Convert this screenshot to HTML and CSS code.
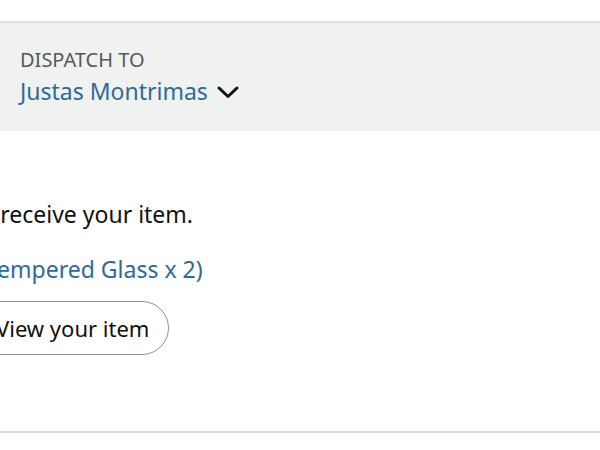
FILE: index.html
```html
<!DOCTYPE html>
<html lang="en">
<head>
    <meta charset="UTF-8">
    <meta name="viewport" content="width=device-width, initial-scale=1.0">
    <title>Order confirmed</title>
    <link rel="stylesheet" href="styles.css">
</head>
<body>
    <div class="page">
        <div class="dispatch">
            <div class="dispatch-label">DISPATCH TO</div>
            <div class="dispatch-name">
                Justas Montrimas
                <svg class="chevron" width="24" height="14" viewBox="0 0 24 14">
                    <path d="M3 3 L12 11.5 L21 3" fill="none" stroke="#0f1111" stroke-width="3" stroke-linecap="round" stroke-linejoin="round"/>
                </svg>
            </div>
        </div>

        <div class="order">
            <p class="order-note">to receive your item.</p>
            <a class="order-item" href="#">(Tempered Glass x 2)</a>
            <button class="view-button" type="button">View your item</button>
        </div>
    </div>
</body>
</html>
```

FILE: styles.css
```css
* {
    margin: 0;
    padding: 0;
    box-sizing: border-box;
}

body {
    font-family: 'Noto Sans', 'Open Sans', sans-serif;
    background: #fff;
    color: #0f1111;
    width: 600px;
    height: 450px;
    overflow: hidden;
}

.page {
    padding-top: 21px;
}

.dispatch {
    background: #f0f2f2;
    border-top: 2px solid #dfe1e1;
    height: 110px;
    padding: 25px 20px 0;
}

.dispatch-label {
    font-size: 20px;
    color: #565959;
    line-height: 24px;
}

.dispatch-name {
    display: flex;
    align-items: center;
    gap: 8px;
    font-size: 23px;
    color: #2f6a97;
    line-height: 30px;
    margin-top: 4px;
}

.chevron {
    margin-top: 2px;
}

.order {
    display: flex;
    flex-direction: column;
    align-items: flex-start;
    margin-left: -28px;
    height: 302px;
    padding-top: 68px;
    border-bottom: 2px solid #dcdcdc;
}

.order-note {
    font-size: 23px;
    line-height: 30px;
}

.order-item {
    font-size: 23px;
    line-height: 30px;
    color: #2f6a97;
    text-decoration: none;
    margin-top: 25px;
    margin-left: 7px;
}

.view-button {
    margin-top: 17px;
    height: 54px;
    padding: 0 19px 0 23px;
    border: 1px solid #8d9096;
    border-radius: 27px;
    background: #fff;
    font-family: inherit;
    font-size: 22px;
    color: #0f1111;
}
```
